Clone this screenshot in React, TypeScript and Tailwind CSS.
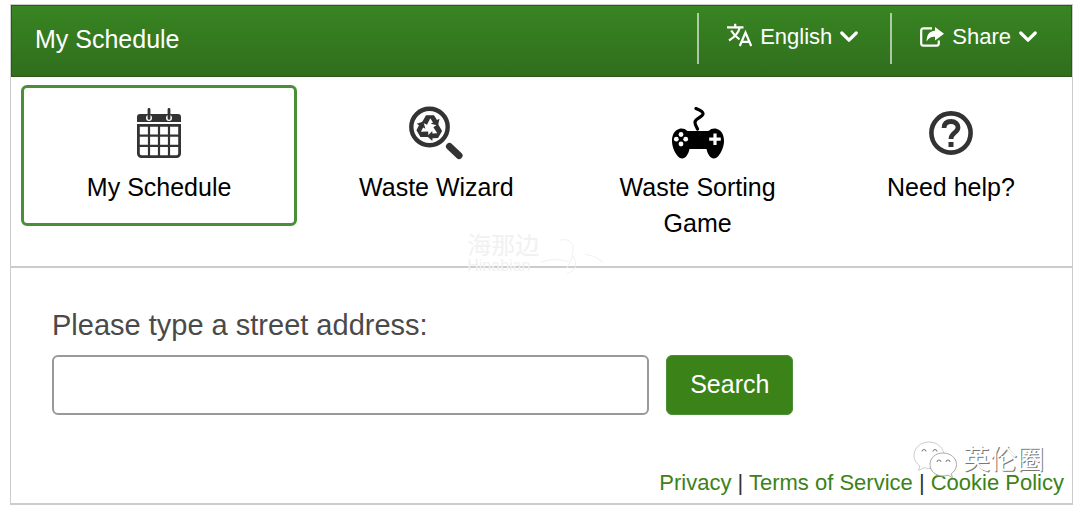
import type { ReactNode } from "react";

function Chevron() {
  return (
    <svg viewBox="0 0 18 12" className="pointer-events-none h-3 w-[18px]" fill="none" stroke="currentColor" strokeWidth="3.2" aria-hidden="true">
      <path d="M1.8 2 9 9.2 16.2 2" strokeLinecap="round" strokeLinejoin="round" />
    </svg>
  );
}

function TranslateIcon() {
  return (
    <svg viewBox="0 0 25 24" className="mb-1 h-6 w-[25px]" fill="none" stroke="currentColor" strokeWidth="2.2" aria-hidden="true">
      <path d="M0 4.300h16.500M8.200.8v3.500M12.800 4.500C11.500 9.500 7 14.500 2 17.500M4.200 7.500c2 3.500 5 6.500 8.300 8.800" />
      <path d="M12.800 23 18.500 9.500 24.200 23M14.800 18.800h7.400" />
    </svg>
  );
}

function ShareIcon() {
  return (
    <svg viewBox="0 0 24 20" className="h-5 w-6" aria-hidden="true">
      <path d="M12 1.4H3.2a2 2 0 0 0-2 2v13.200a2 2 0 0 0 2 2h13.600a2 2 0 0 0 2-2V13.500" fill="none" stroke="currentColor" strokeWidth="2.200" />
      <path d="M15 0l9 6.800-9 6.700V9.800C11 9.600 9 11 6.600 14.400 6.600 8 9.200 4.200 15 3.800z" fill="currentColor" />
    </svg>
  );
}

function CalendarIcon() {
  return (
    <svg viewBox="0 0 44 50" className="h-[50px] w-11" aria-hidden="true">
      <path d="M3 6h38a3 3 0 0 1 3 3v5H0V9a3 3 0 0 1 3-3z" fill="#333" />
      <path d="M1.400 17.400h41.200v28.200a3 3 0 0 1-3 3H4.400a3 3 0 0 1-3-3z" fill="none" stroke="#333" strokeWidth="2.800" />
      <path d="M12 17v31M22 17v31M32 17v31M1 27.600h42M1 37.800h42" stroke="#333" strokeWidth="2.200" />
      <circle cx="12" cy="10" r="3" fill="#fff" />
      <circle cx="32" cy="10" r="3" fill="#fff" />
      <path d="M12 1.400v9M32 1.400v9" stroke="#333" strokeWidth="2.800" strokeLinecap="round" />
    </svg>
  );
}

// one bent arrow, turned three times round the lens centre
const ARROW = "M-7.500-5.500-3.500-12.500H4.500L7.500-7.800 10-9 8.500-2.200 1.300-4 3.500-5.300.800-9.500-2.500-3z";

function WizardIcon() {
  return (
    <svg viewBox="0 0 54 54" className="size-[54px]" aria-hidden="true">
      <circle cx="20.500" cy="21" r="18.200" fill="none" stroke="#333" strokeWidth="4.400" />
      <g transform="translate(20.500 21.800)" fill="#333">
        <path d={ARROW} />
        <path d={ARROW} transform="rotate(120)" />
        <path d={ARROW} transform="rotate(240)" />
      </g>
      <path d="m40.500 40.500 9.500 9" stroke="#333" strokeWidth="7" strokeLinecap="round" />
    </svg>
  );
}

function GameIcon() {
  return (
    <svg viewBox="0 0 52 52" className="size-[52px]" aria-hidden="true">
      <path d="M24 1.500c3 1.200 7.500 2.800 7 5.500-.5 3-7.500 4.500-8 8-.3 2 1 4 2.500 7" fill="none" stroke="#000" strokeWidth="3.200" strokeLinecap="round" />
      <path d="M7 22c3-1 6-.2 8.500 2h21c2.500-2.200 5.500-3 8.500-2 5 1.500 7 6.500 7 12 0 6-3 12-6 15.500-2.500 2.700-6.500 2.500-8.500-.5-2-2.800-2.300-4.500-3-7h-17c-.7 2.500-1 4.200-3 7-2 3-6 3.200-8.500.5C3 46 0 40 0 34c0-5.500 2-10.500 7-12z" fill="#000" />
      <g fill="#fff">
        <circle cx="9" cy="27.500" r="2.400" />
        <circle cx="9" cy="37" r="2.400" />
        <circle cx="4.300" cy="32.200" r="2.400" />
        <circle cx="13.700" cy="32.200" r="2.400" />
      </g>
      <path d="M43 26.500v11.500M37.200 32.200h11.600" stroke="#fff" strokeWidth="3.200" />
    </svg>
  );
}

function HelpIcon() {
  return (
    <svg viewBox="0 0 44 44" className="size-11" fill="none" stroke="#333" aria-hidden="true">
      <circle cx="22" cy="22" r="19.600" strokeWidth="4.600" />
      <path d="M15 17c.2-4.500 3-6.500 7-6.500s7 2.300 7 6c0 5-7 5.200-7 11.500" strokeWidth="4.800" />
      <path d="M22 31v5" strokeWidth="5" />
    </svg>
  );
}

const tabs: { label: string; icon: ReactNode; active?: boolean }[] = [
  { label: "My Schedule", icon: <CalendarIcon />, active: true },
  { label: "Waste Wizard", icon: <WizardIcon /> },
  { label: "Waste Sorting Game", icon: <GameIcon /> },
  { label: "Need help?", icon: <HelpIcon /> },
];

function Header() {
  return (
    <header className="flex items-start justify-between border border-[#2b5a19] bg-linear-to-b from-[#388522] to-[#306e1d] pt-[7px] pb-[11px] text-white">
      <h1 className="pl-[23px] text-[25px] leading-[52px]">My Schedule</h1>
      <div className="flex text-[22px] leading-[48px]">
        <label className="flex h-[51px] items-start border-l-2 border-white/60 pr-8 pl-7">
          <span className="flex h-12 items-center gap-2">
            <TranslateIcon />
            <select aria-label="Language" className="field-sizing-content appearance-none bg-transparent outline-none">
              <option>English</option>
              <option>Français</option>
            </select>
            <Chevron />
          </span>
        </label>
        <button type="button" className="flex h-[51px] items-start border-l-2 border-white/60 pr-[34px] pl-7">
          <span className="flex h-12 items-center gap-2">
            <ShareIcon />
            Share
            <Chevron />
          </span>
        </button>
      </div>
    </header>
  );
}

function TabBar() {
  return (
    <nav className="grid grid-cols-[276fr_254fr_244fr_238fr] items-start gap-3 border-b-2 border-[#ccc] pt-2 pr-0.5 pb-1 pl-2.5">
      {tabs.map((tab) => (
        <button
          key={tab.label}
          type="button"
          className={`flex flex-col items-center gap-2 rounded-md border-[3px] px-5 pt-[17px] pb-[18px] text-[25px] leading-9 text-black ${
            tab.active ? "border-[#4a8f38]" : "border-transparent"
          }`}
        >
          <span className="flex h-14 items-center">{tab.icon}</span>
          {tab.label}
        </button>
      ))}
    </nav>
  );
}

function Watermark() {
  return (
    <div className="pointer-events-none absolute right-7 bottom-6 flex items-center gap-1">
      <svg viewBox="0 0 46 38" className="h-[38px] w-[46px]" fill="#fff" stroke="#aaa" strokeWidth="1" aria-hidden="true">
        <path d="M16 1C7.500 1 1 7 1 14.500c0 4.500 2.400 8 6 10.500l-1.500 4.500 5.500-2.800c2 .6 3.500.8 6 .8 8 0 14-5.500 14-13S24.500 1 16 1z" stroke="#ccc" />
        <path d="M30 12c-7.500 0-13 5-13 11.500S22.500 35 30 35c2 0 3.500-.3 5-.8l4.500 2.500-1.200-4c3.200-2.200 5.200-5.300 5.200-9.200C43.500 17 37.500 12 30 12z" />
        <path d="M9 10.500a2 2 0 0 1 4 0M20 10.500a2 2 0 0 1 4 0M24 21a2 2 0 0 1 4 0M33 21a2 2 0 0 1 4 0" fill="none" stroke="#777" />
      </svg>
      <span className="font-['Liberation_Sans','Noto_Sans_CJK_SC',sans-serif] text-[27px] leading-9 text-white [text-shadow:1px_1px_0_#777]">
        英伦圈
      </span>
    </div>
  );
}

export default function App() {
  return (
    <div className="bg-white pt-1 pr-[7px] pl-[10px] font-['Liberation_Sans',Arial,sans-serif]">
      <main className="relative border border-b-2 border-[#ccc]">
        <Header />
        <div className="relative">
          <TabBar />
          <div className="pointer-events-none absolute bottom-0 left-[43%] flex translate-y-2 items-center text-[#f1f1f1]">
            <div className="font-['Liberation_Sans','Noto_Sans_CJK_SC',sans-serif]">
              <div className="text-2xl leading-5">海那边</div>
              <div className="text-base leading-5">Hinabian</div>
            </div>
            <svg viewBox="0 0 66 40" className="h-10 w-[66px]" fill="none" stroke="currentColor" aria-hidden="true">
              <path d="M2 26q15-5 28 0M20 4q16-3 14 12-1 8-6 16M34 20q8 12-6 18M46 18q10 1 18 8" />
            </svg>
          </div>
        </div>
        <form className="px-[41px] pt-[37px]" onSubmit={(e) => e.preventDefault()}>
          <label htmlFor="address" className="block text-[29px] leading-10 text-[#4a4a4a]">
            Please type a street address:
          </label>
          <div className="mt-2.5 flex h-[60px] gap-[17px]">
            <input id="address" type="text" className="w-[61%] rounded-md border-2 border-[#999] px-4 text-[25px] outline-none" />
            <button type="submit" className="rounded-md border border-[#4a8f38] bg-[#3b8218] px-[23px] text-[25px] text-white">
              Search
            </button>
          </div>
        </form>
        <footer className="mt-[53px] flex justify-end pr-2 pb-[5px] text-[22px] leading-[30px] text-[#333]">
          <p>
            <a href="#privacy" className="text-[#3b8218]">Privacy</a> | <a href="#terms" className="text-[#3b8218]">Terms of Service</a> |{" "}
            <a href="#cookies" className="text-[#3b8218]">Cookie Policy</a>
          </p>
        </footer>
        <Watermark />
      </main>
    </div>
  );
}
